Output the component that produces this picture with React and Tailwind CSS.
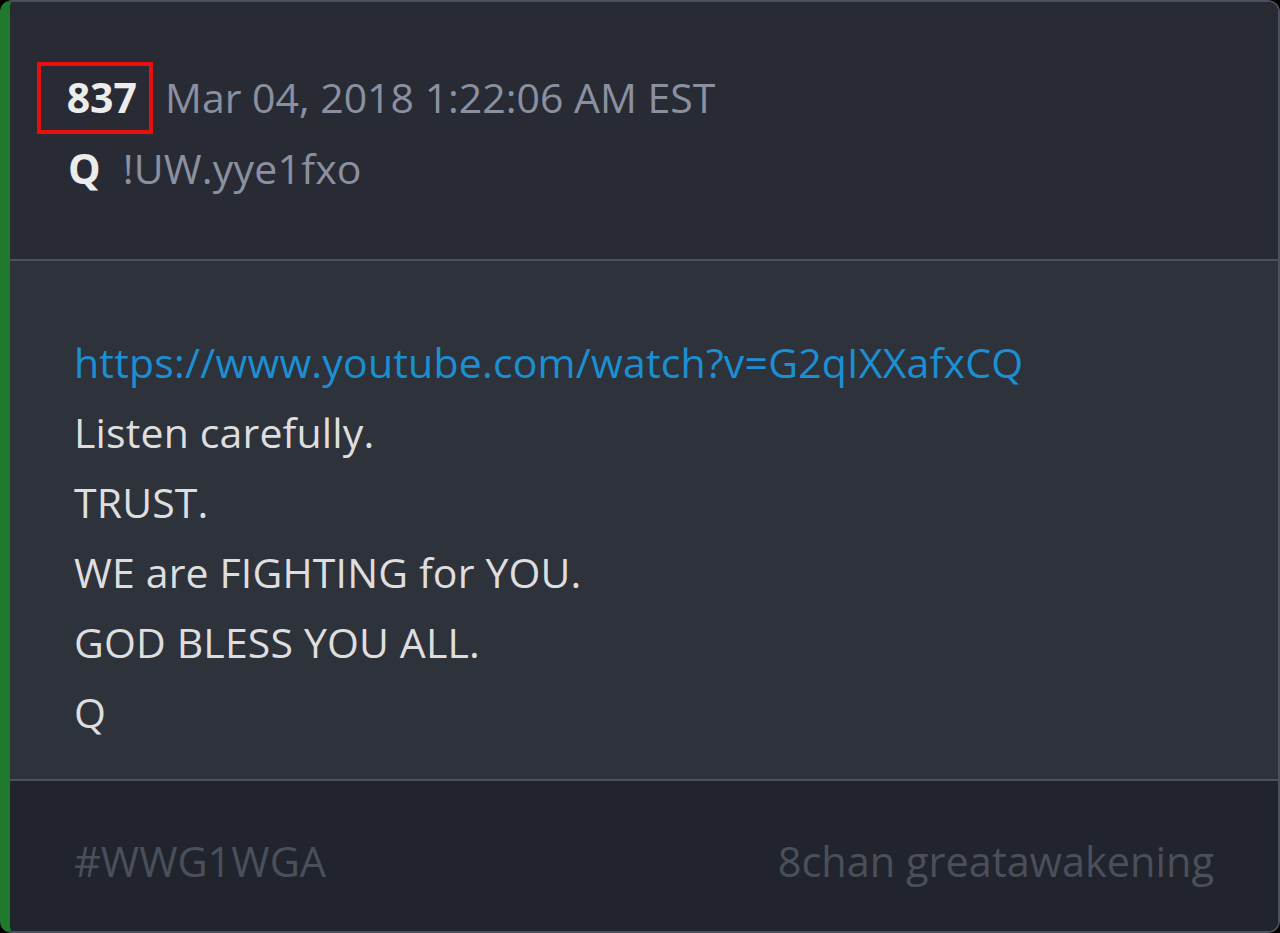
const LINES = ['Listen carefully.', 'TRUST.', 'WE are FIGHTING for YOU.', 'GOD BLESS YOU ALL.', 'Q'];

export default function App() {
  return (
    <div className="h-[933px] w-[1280px] bg-black font-['Open_Sans','Liberation_Sans',sans-serif]">
      <div className="flex h-full flex-col overflow-hidden rounded-[12px] border-2 border-l-[10px] border-[#4b505a] border-l-[#1f7a2e]">
        {/* header */}
        <div className="flex h-[257px] shrink-0 flex-col bg-[#282b34] pl-[27px] pt-[60px]">
          <div className="flex h-[72px] items-center">
            <div className="flex h-[72px] w-[116px] items-center justify-end border-4 border-[#e8100f] pr-[12px] text-[41px] font-bold text-[#ececec]">
              837
            </div>
            <span className="ml-[12px] text-[41px] text-[#8b90a0]">Mar 04, 2018 1:22:06 AM EST</span>
          </div>
          <div className="flex h-[70px] items-center pl-[31px]">
            <span className="text-[41px] font-bold text-[#ececec]">Q</span>
            <span className="ml-[22px] tracking-[0.2px] text-[41px] text-[#8b90a0]">!UW.yye1fxo</span>
          </div>
        </div>

        {/* post body */}
        <div className="h-[522px] shrink-0 border-y-2 border-[#4b505a] bg-[#2e323b] pl-[64px] pt-[66px] text-[41px] leading-[70px] text-[#dedede]">
          <a className="block tracking-[0.2px] text-[#1b8fd2]" href="#">
            https://www.youtube.com/watch?v=G2qIXXafxCQ
          </a>
          {LINES.map((l) => (
            <p key={l} className="tracking-[0.15px]">{l}</p>
          ))}
        </div>

        {/* footer */}
        <div className="flex flex-1 items-center justify-between bg-[#21242d] pl-[64px] pr-[64px] pt-[10px] text-[41.5px] text-[#4a4f5a]">
          <span>#WWG1WGA</span>
          <span>8chan greatawakening</span>
        </div>
      </div>
    </div>
  );
}
